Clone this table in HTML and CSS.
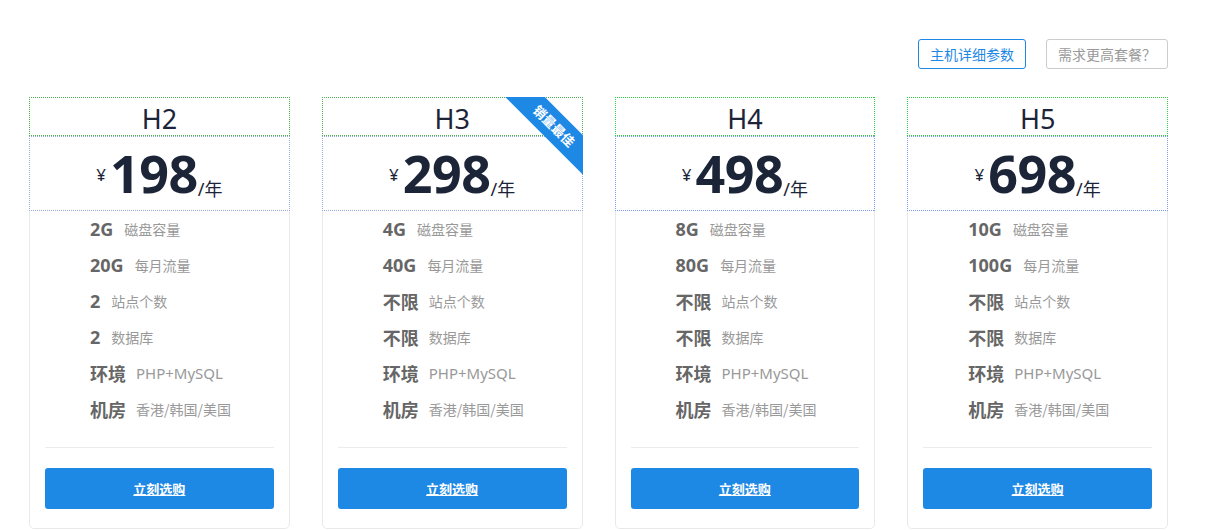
FILE: index.html
```html
<!DOCTYPE html>
<html lang="zh-CN">
<head>
<meta charset="utf-8">
<title>主机套餐</title>
<link rel="stylesheet" href="styles.css">
</head>
<body>
<div class="page">
  <div class="toolbar">
    <a class="tbtn tbtn-primary" href="#">主机详细参数</a>
    <a class="tbtn tbtn-muted" href="#">需求更高套餐？</a>
  </div>
  <div class="plans">
    <div class="card">
      <div class="title">H2</div>
      <div class="price"><span class="cur">¥</span><span class="num">198</span><span class="unit">/年</span></div>
      <ul class="feats">
        <li><b>2G</b><span>磁盘容量</span></li>
        <li><b>20G</b><span>每月流量</span></li>
        <li><b>2</b><span>站点个数</span></li>
        <li><b>2</b><span>数据库</span></li>
        <li><b class="cn">环境</b><span class="en">PHP+MySQL</span></li>
        <li><b class="cn">机房</b><span>香港/韩国/美国</span></li>
      </ul>
      <div class="foot"><a class="buy" href="#">立刻选购</a></div>
    </div>
    <div class="card">
      <div class="ribbon-clip"><div class="ribbon">销量最佳</div></div>
      <div class="title">H3</div>
      <div class="price"><span class="cur">¥</span><span class="num">298</span><span class="unit">/年</span></div>
      <ul class="feats">
        <li><b>4G</b><span>磁盘容量</span></li>
        <li><b>40G</b><span>每月流量</span></li>
        <li><b class="cn">不限</b><span>站点个数</span></li>
        <li><b class="cn">不限</b><span>数据库</span></li>
        <li><b class="cn">环境</b><span class="en">PHP+MySQL</span></li>
        <li><b class="cn">机房</b><span>香港/韩国/美国</span></li>
      </ul>
      <div class="foot"><a class="buy" href="#">立刻选购</a></div>
    </div>
    <div class="card card-bright">
      <div class="title">H4</div>
      <div class="price"><span class="cur">¥</span><span class="num">498</span><span class="unit">/年</span></div>
      <ul class="feats">
        <li><b>8G</b><span>磁盘容量</span></li>
        <li><b>80G</b><span>每月流量</span></li>
        <li><b class="cn">不限</b><span>站点个数</span></li>
        <li><b class="cn">不限</b><span>数据库</span></li>
        <li><b class="cn">环境</b><span class="en">PHP+MySQL</span></li>
        <li><b class="cn">机房</b><span>香港/韩国/美国</span></li>
      </ul>
      <div class="foot"><a class="buy" href="#">立刻选购</a></div>
    </div>
    <div class="card card-bright">
      <div class="title">H5</div>
      <div class="price"><span class="cur">¥</span><span class="num">698</span><span class="unit">/年</span></div>
      <ul class="feats">
        <li><b>10G</b><span>磁盘容量</span></li>
        <li><b>100G</b><span>每月流量</span></li>
        <li><b class="cn">不限</b><span>站点个数</span></li>
        <li><b class="cn">不限</b><span>数据库</span></li>
        <li><b class="cn">环境</b><span class="en">PHP+MySQL</span></li>
        <li><b class="cn">机房</b><span>香港/韩国/美国</span></li>
      </ul>
      <div class="foot"><a class="buy" href="#">立刻选购</a></div>
    </div>
  </div>
</div>
</body>
</html>
```
FILE: styles.css
```css
* { box-sizing: border-box; }
html, body { margin: 0; padding: 0; background: #fff; }
body {
  font-family: "Noto Sans", "Noto Sans CJK SC", sans-serif;
  color: #333;
}
.page {
  width: 1139px;
  margin-left: 29px;
  padding-top: 39px;
}
.toolbar {
  display: flex;
  justify-content: flex-end;
  gap: 20px;
  height: 30px;
}
.tbtn {
  display: flex;
  align-items: center;
  height: 30px;
  padding: 0 11px;
  font-size: 14px;
  border-radius: 3px;
  text-decoration: none;
  font-family: "Noto Sans CJK SC", sans-serif;
}
.tbtn-primary { border: 1px solid #1e88e5; color: #1e88e5; }
.tbtn-muted { border: 1px solid #ccc; color: #999; }

.plans {
  margin-top: 28px;
  display: grid;
  grid-template-columns: repeat(4, 1fr);
  gap: 32px;
}
.card {
  position: relative;
  border: 1px solid #e9e9e9;
  border-radius: 0 0 5px 5px;
  padding-bottom: 19px;
  --title-dot: #4caf50;
  --price-dot: #98acdf;
}
.card-bright {
  --title-dot: #2ecc40;
  --price-dot: #7b9cf7;
}

.title, .price { position: relative; }
.title::after, .price::after {
  content: "";
  position: absolute;
  inset: 0;
  pointer-events: none;
  background:
    repeating-linear-gradient(90deg, var(--dot) 0 1px, transparent 1px 2px) top left / 100% 1px no-repeat,
    repeating-linear-gradient(90deg, var(--dot) 0 1px, transparent 1px 2px) bottom left / 100% 1px no-repeat,
    repeating-linear-gradient(180deg, var(--dot) 0 1px, transparent 1px 2px) top left / 1px 100% no-repeat,
    repeating-linear-gradient(180deg, var(--dot) 0 1px, transparent 1px 2px) top right / 1px 100% no-repeat;
}
.title::after { --dot: var(--title-dot); }
.price::after { --dot: var(--price-dot); }

.title {
  margin: -1px -1px 0;
  height: 39px;
  text-align: center;
  font-size: 27px;
  line-height: 32px;
  padding-top: 6px;
  color: #1c2438;
  font-weight: 400;
  background: #fff;
}
.price {
  margin: 0 -1px;
  height: 75px;
  display: flex;
  justify-content: center;
  align-items: baseline;
  color: #1c2438;
  padding-top: 3px;
  background: #fff;
}

.cur { font-size: 17px; margin-right: 4px; position: relative; top: -12px; }
.num { font-size: 52px; font-weight: 700; line-height: 68px; letter-spacing: -0.5px; }
.unit { font-size: 18px; position: relative; top: 3px; margin-left: 0; }

.feats {
  list-style: none;
  margin: 0;
  padding: 0 0 0 60px;
}
.feats li {
  height: 36px;
  display: flex;
  align-items: center;
  white-space: nowrap;
}
.feats b {
  font-size: 18px;
  font-weight: 700;
  color: #666;
  margin-right: 11px;
}
.feats b.cn { font-size: 18px; font-family: "Noto Sans CJK SC", sans-serif; margin-right: 10px; }
.feats span {
  font-size: 14px;
  color: #999;
  font-family: "Noto Sans CJK SC", sans-serif;
}
.feats span.en { font-size: 15px; font-family: "Noto Sans", sans-serif; }

.foot {
  margin: 20px 15px 0;
  padding-top: 20px;
  border-top: 1px solid #ececec;
}
.buy {
  display: flex;
  align-items: center;
  justify-content: center;
  height: 41px;
  background: #1e88e5;
  border-radius: 3px;
  color: #fff;
  font-size: 13px;
  font-weight: 700;
  text-decoration: underline;
  font-family: "Noto Sans CJK SC", sans-serif;
}

.ribbon-clip {
  position: absolute;
  top: -1px;
  right: -1px;
  width: 110px;
  height: 110px;
  overflow: hidden;
  pointer-events: none;
  z-index: 2;
}
.ribbon {
  position: absolute;
  top: 15px;
  right: -31px;
  width: 120px;
  height: 28px;
  background: #1e88e5;
  color: #fff;
  font-size: 13px;
  font-weight: 700;
  text-align: center;
  line-height: 28px;
  transform: rotate(45deg);
  font-family: "Noto Sans CJK SC", sans-serif;
}
```
